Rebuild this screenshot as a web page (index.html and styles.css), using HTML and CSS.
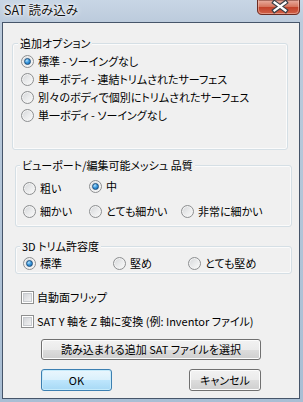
FILE: index.html
```html
<!DOCTYPE html>
<html lang="ja">
<head>
<meta charset="utf-8">
<title>SAT 読み込み</title>
<link rel="stylesheet" href="styles.css">
</head>
<body>
<div class="window">
  <div class="titlebar">
    <span class="title">SAT 読み込み</span>
    <svg class="close" width="43" height="15" viewBox="0 0 43 15">
      <defs>
        <linearGradient id="cg" x1="0" y1="0" x2="0" y2="1">
          <stop offset="0" stop-color="#eab0a2"/>
          <stop offset="0.45" stop-color="#d6765f"/>
          <stop offset="0.5" stop-color="#c2422a"/>
          <stop offset="1" stop-color="#d2634a"/>
        </linearGradient>
      </defs>
      <path d="M0.5 0 V10 Q0.5 14.5 5 14.5 H38 Q42.5 14.5 42.5 10 V0 Z" fill="url(#cg)" stroke="#6b2c22"/>
      <path d="M1.5 0 V10 Q1.5 13.5 5 13.5 H38 Q41.5 13.5 41.5 10 V0" fill="none" stroke="#f2c4b8" stroke-opacity="0.55"/>
      <path d="M17.5 2.5 L28.5 10.5 M28.5 2.5 L17.5 10.5" stroke="#3b3f46" stroke-width="4.6" stroke-linecap="square"/>
      <path d="M17.5 2.5 L28.5 10.5 M28.5 2.5 L17.5 10.5" stroke="#ffffff" stroke-width="2.2" stroke-linecap="square"/>
    </svg>
  </div>
  <div class="client">
    <div class="group g1">
      <div class="legend">追加オプション</div>
      <div class="list">
        <div class="opt"><span class="radio on"></span>標準 - ソーイングなし</div>
        <div class="opt"><span class="radio"></span>単一ボディ - 連結トリムされたサーフェス</div>
        <div class="opt"><span class="radio"></span>別々のボディで個別にトリムされたサーフェス</div>
        <div class="opt"><span class="radio"></span>単一ボディ - ソーイングなし</div>
      </div>
    </div>
    <div class="group g2">
      <div class="legend">ビューポート/編集可能メッシュ 品質</div>
      <div class="grid q">
        <div class="opt"><span class="radio"></span>粗い</div>
        <div class="opt raise"><span class="radio on"></span>中</div>
        <div class="opt"></div>
        <div class="opt"><span class="radio"></span>細かい</div>
        <div class="opt"><span class="radio"></span>とても細かい</div>
        <div class="opt"><span class="radio"></span>非常に細かい</div>
      </div>
    </div>
    <div class="group g3">
      <div class="legend">3D トリム許容度</div>
      <div class="grid t">
        <div class="opt"><span class="radio on"></span>標準</div>
        <div class="opt"><span class="radio"></span>堅め</div>
        <div class="opt"><span class="radio"></span>とても堅め</div>
      </div>
    </div>
    <div class="opt check c1"><span class="box"></span>自動面フリップ</div>
    <div class="opt check c2"><span class="box"></span>SAT Y 軸を Z 軸に変換 (例: Inventor ファイル)</div>
    <button class="btn wide">読み込まれる追加 SAT ファイルを選択</button>
    <div class="actions">
      <button class="btn ok">OK</button>
      <button class="btn cancel">キャンセル</button>
    </div>
  </div>
</div>
</body>
</html>
```
FILE: styles.css
```css
html, body {
  margin: 0;
  padding: 0;
  overflow: hidden;
  background: #b9cadc;
}
.window {
  width: 303px;
  height: 402px;
  box-sizing: border-box;
  padding: 0 3px 3px 2px;
  display: flex;
  flex-direction: column;
  background: linear-gradient(#c8d6e5 0px, #bccbdc 22px, #b3c5d8 200px, #a9bed4 402px);
  font-family: "Noto Sans CJK JP", sans-serif;
  font-size: 11px;
  font-feature-settings: "palt";
  color: #000;
}
.titlebar {
  height: 22px;
  display: flex;
  justify-content: space-between;
  align-items: flex-start;
}
.title {
  margin-left: 2px;
  font-size: 12.5px;
  line-height: 20px;
  color: #111;
  text-shadow: 0 0 6px #fff, 0 0 3px #fff, 0 0 1px #fff;
}
.close {
  display: block;
}
.client {
  flex: 1;
  border: 1px solid #46556a;
  background: #f0f0f0;
  display: flex;
  flex-direction: column;
  align-items: flex-start;
}
.group {
  box-sizing: border-box;
  border: 1px solid #d5dfe5;
  border-radius: 3px;
  box-shadow: inset 0 0 0 1px #fbfbfb;
}
.legend {
  display: table;
  height: 14px;
  line-height: 14px;
  margin: -8px 0 0 -3px;
  padding: 0 2px;
  background: #f0f0f0;
  white-space: nowrap;
}
.g1 {
  margin: 20px 0 0 9px;
  width: 276px;
  height: 107px;
  padding-left: 8px;
}
.list {
  margin-top: 2px;
}
.g2 {
  margin: 15px 0 0 12px;
  width: 277px;
  height: 62px;
  padding-left: 7px;
}
.g3 {
  margin: 19px 0 0 12px;
  width: 277px;
  height: 28px;
  padding-left: 7px;
}
.opt {
  height: 18px;
  display: flex;
  align-items: center;
  white-space: nowrap;
}
.grid {
  display: grid;
  grid-template-rows: 18px;
  row-gap: 5px;
}
.q {
  margin-top: 7px;
  grid-template-columns: 66px 92px auto;
}
.t {
  margin-top: 1px;
  grid-template-columns: 90px 75px auto;
}
.raise {
  margin-top: -2px;
}
.radio {
  position: relative;
  flex: none;
  width: 13px;
  height: 13px;
  box-sizing: border-box;
  margin-right: 4px;
  border-radius: 50%;
  border: 1px solid #8d8f91;
  background: linear-gradient(135deg, #d3d5d8 0%, #e9eaeb 50%, #fbfbfb 100%);
  box-shadow: inset 0 0 0 1px #f3f3f3;
}
.radio.on::after {
  content: "";
  position: absolute;
  left: 2px;
  top: 2px;
  width: 7px;
  height: 7px;
  box-sizing: border-box;
  border-radius: 50%;
  border: 1px solid #1c4f7d;
  background: radial-gradient(circle at 35% 30%, #b4e2fb 0%, #3d9be0 45%, #0d5fa8 100%);
}
.check .box {
  flex: none;
  width: 13px;
  height: 13px;
  box-sizing: border-box;
  margin-right: 3px;
  border: 1px solid #8e8f8f;
  background: linear-gradient(135deg, #c9ccd1 0%, #e5e6e8 55%, #f8f8f8 100%);
  box-shadow: inset 0 0 0 1px #fff, inset 0 0 0 2px #c7cace;
}
.c1 {
  margin: 14px 0 0 18px;
}
.c2 {
  margin: 6px 0 0 18px;
}
.btn {
  box-sizing: border-box;
  margin: 0;
  padding: 0;
  font: inherit;
  color: #000;
  border: 1px solid #707070;
  border-radius: 3px;
  background: linear-gradient(#f2f2f2 0%, #ebebeb 50%, #dddddd 50%, #cfcfcf 100%);
  box-shadow: inset 0 0 0 1px #fcfcfc;
  line-height: 1;
}
.wide {
  margin: 9px 0 0 38px;
  width: 220px;
  height: 21px;
}
.actions {
  display: flex;
  gap: 77px;
  margin: 9px 0 0 38px;
}
.ok {
  width: 71px;
  height: 22px;
  border-color: #3c7fb1;
  background: linear-gradient(#eaf6fd 0%, #d9f0fc 50%, #bee6fd 50%, #a7d9f5 100%);
  box-shadow: inset 0 0 0 1px #c6ebfb;
}
.cancel {
  width: 72px;
  height: 22px;
}
```
